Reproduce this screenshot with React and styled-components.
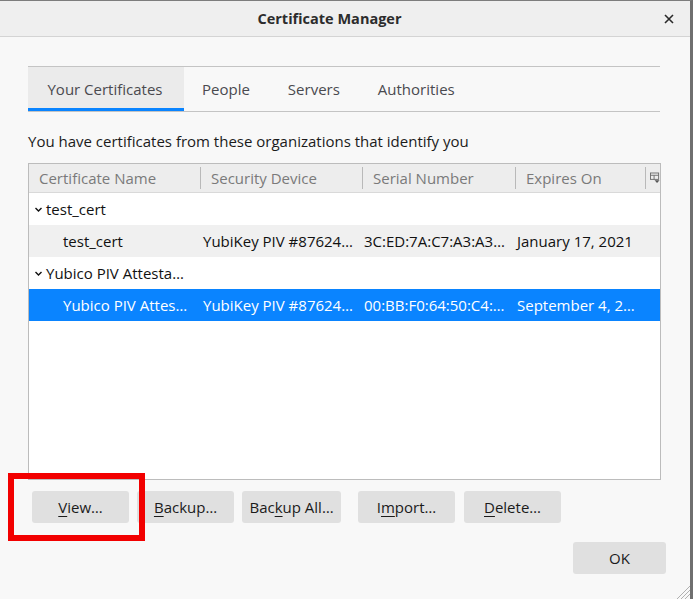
import React from "react";
import styled, { createGlobalStyle } from "styled-components";

const Global = createGlobalStyle`
  html, body { margin: 0; padding: 0; background: #f8f8f8; }
  body { font-family: "Open Sans", "Noto Sans", sans-serif; }
  * { box-sizing: border-box; }
`;

const Window = styled.div`
  position: relative;
  width: 693px;
  height: 599px;
  background: #f8f8f8;
  border-top: 1px solid #7d7d7d;
  border-right: 3px solid #6f6f6f;
  display: flex;
  flex-direction: column;
  overflow: hidden;
`;

const TitleBar = styled.div`
  height: 36px;
  flex: none;
  background: #efefef;
  border-bottom: 1px solid #d4d4d4;
  display: flex;
  align-items: center;
`;

const Title = styled.div`
  flex: 1;
  text-align: center;
  padding-left: 10px;
  font-weight: 700;
  font-size: 14.5px;
  color: #2c2c2c;
`;

const Close = styled.div`
  width: 40px;
  display: flex;
  align-items: center;
  justify-content: center;
  margin-right: 1px;
`;

const Body = styled.div`
  flex: 1;
  display: flex;
  flex-direction: column;
  padding: 29px 29px 0 28px;
`;

const Tabs = styled.div`
  display: flex;
  border-top: 1px solid #c4c4c4;
  border-bottom: 1px solid #c4c4c4;
  height: 46px;
  margin-right: 1px;
`;

const Tab = styled.div`
  padding: 2px 20px 0 18px;
  min-width: ${(p) => (p.$active ? "156px" : "0")};
  display: flex;
  align-items: center;
  justify-content: center;
  font-size: 15px;
  color: #4a4a4f;
  background: ${(p) => (p.$active ? "#ebebeb" : "transparent")};
  border-bottom: 3px solid ${(p) => (p.$active ? "#0a84ff" : "transparent")};
`;

const Intro = styled.div`
  font-size: 15px;
  color: #1b1b1b;
  margin: 18px 0 11px 0;
  line-height: 22px;
`;

const Tree = styled.div`
  height: 317px;
  border: 1px solid #bcbcbc;
  background: #ffffff;
  display: flex;
  flex-direction: column;
`;

const cols = "171px 162px 153px 130px 1fr";

const HeadRow = styled.div`
  height: 29px;
  flex: none;
  background: #ededed;
  border-bottom: 1px solid #d9d9d9;
  display: grid;
  grid-template-columns: ${cols};
  align-items: center;
`;

const HeadCell = styled.div`
  font-size: 15px;
  color: #7a7a7a;
  padding-left: ${(p) => p.$pad ?? 10}px;
  border-left: ${(p) => (p.$first ? "none" : "1px solid #b9b9b9")};
  height: 22px;
  line-height: 22px;
  white-space: nowrap;
  overflow: hidden;
  display: flex;
  align-items: center;
`;

const Row = styled.div`
  height: 32px;
  flex: none;
  display: grid;
  grid-template-columns: ${cols};
  align-items: center;
  background: ${(p) => (p.$sel ? "#0a84ff" : p.$alt ? "#f0f0f0" : "#ffffff")};
  color: ${(p) => (p.$sel ? "#ffffff" : "#111111")};
`;

const Cell = styled.div`
  font-size: 15px;
  padding-left: ${(p) => p.$indent ?? 3}px;
  white-space: nowrap;
  display: flex;
  align-items: center;
  gap: 3px;
`;

const GroupCell = styled(Cell)`
  grid-column: 1 / 3;
  padding-left: 5px;
`;

const ButtonRow = styled.div`
  display: flex;
  align-items: center;
  margin-top: 11px;
  padding-left: 4px;
`;

const Button = styled.div`
  width: ${(p) => p.$w}px;
  height: 32px;
  margin-right: ${(p) => p.$gap ?? 8}px;
  background: #e0e0e0;
  border-radius: 3px;
  display: flex;
  align-items: center;
  justify-content: center;
  font-size: 15px;
  color: #1b1b1b;
  u { text-decoration-thickness: 1px; text-underline-offset: 3px; }
`;

const Footer = styled.div`
  display: flex;
  justify-content: flex-end;
  margin-top: 19px;
  margin-right: -5px;
`;

const Highlight = styled.div`
  position: absolute;
  left: 8px;
  top: 472px;
  width: 137px;
  height: 68px;
  border: 6px solid #f20000;
  pointer-events: none;
`;

const Grip = styled.svg`
  position: absolute;
  right: 0;
  bottom: 0;
`;

const Chevron = () => (
  <svg width="9" height="9" viewBox="0 0 9 9">
    <path d="M1.5 3 L4.5 6 L7.5 3" fill="none" stroke="currentColor" strokeWidth="1.4" />
  </svg>
);

const ColPicker = () => (
  <svg width="11" height="12" viewBox="0 0 11 12">
    <rect x="0.5" y="0.5" width="9" height="7" fill="none" stroke="#6a6a6a" />
    <line x1="0.5" y1="3" x2="9.5" y2="3" stroke="#6a6a6a" />
    <line x1="4.5" y1="3" x2="4.5" y2="7.5" stroke="#6a6a6a" />
    <path d="M5 8.5 L10.5 8.5 L7.75 11.5 Z" fill="#555" />
  </svg>
);

export default function App() {
  return (
    <>
      <Global />
      <Window>
        <TitleBar>
          <Title>Certificate Manager</Title>
          <Close>
            <svg width="10" height="10" viewBox="0 0 10 10">
              <path d="M1 1 L9 9 M9 1 L1 9" stroke="#2a2a2a" strokeWidth="1.6" />
            </svg>
          </Close>
        </TitleBar>
        <Body>
          <Tabs>
            <Tab $active>Your Certificates</Tab>
            <Tab>People</Tab>
            <Tab>Servers</Tab>
            <Tab>Authorities</Tab>
          </Tabs>
          <Intro>You have certificates from these organizations that identify you</Intro>
          <Tree>
            <HeadRow>
              <HeadCell $first>Certificate Name</HeadCell>
              <HeadCell>Security Device</HeadCell>
              <HeadCell>Serial Number</HeadCell>
              <HeadCell>Expires On</HeadCell>
              <HeadCell $pad={4}>
                <ColPicker />
              </HeadCell>
            </HeadRow>
            <Row>
              <GroupCell>
                <Chevron />
                <span>test_cert</span>
              </GroupCell>
            </Row>
            <Row $alt>
              <Cell $indent={34}>test_cert</Cell>
              <Cell>YubiKey PIV #87624…</Cell>
              <Cell $indent={2}>3C:ED:7A:C7:A3:A3…</Cell>
              <Cell $indent={2}>January 17, 2021</Cell>
            </Row>
            <Row>
              <GroupCell>
                <Chevron />
                <span>Yubico PIV Attesta…</span>
              </GroupCell>
            </Row>
            <Row $sel>
              <Cell $indent={34}>Yubico PIV Attes…</Cell>
              <Cell>YubiKey PIV #87624…</Cell>
              <Cell $indent={2}>00:BB:F0:64:50:C4:…</Cell>
              <Cell $indent={2}>September 4, 2…</Cell>
            </Row>
          </Tree>
          <ButtonRow>
            <Button $w={97}><span><u>V</u>iew…</span></Button>
            <Button $w={97}><span><u>B</u>ackup…</span></Button>
            <Button $w={99} $gap={17}><span>Bac<u>k</u>up All…</span></Button>
            <Button $w={97} $gap={9}><span>I<u>m</u>port…</span></Button>
            <Button $w={97}><span><u>D</u>elete…</span></Button>
          </ButtonRow>
          <Footer>
            <Button $w={93} $gap={0}>OK</Button>
          </Footer>
        </Body>
        <Highlight />
        <Grip width="16" height="16" viewBox="0 0 16 16">
          <path d="M16 3 L3 16 M16 7 L7 16 M16 11 L11 16" stroke="#b0b0b0" strokeWidth="1" />
        </Grip>
      </Window>
    </>
  );
}
